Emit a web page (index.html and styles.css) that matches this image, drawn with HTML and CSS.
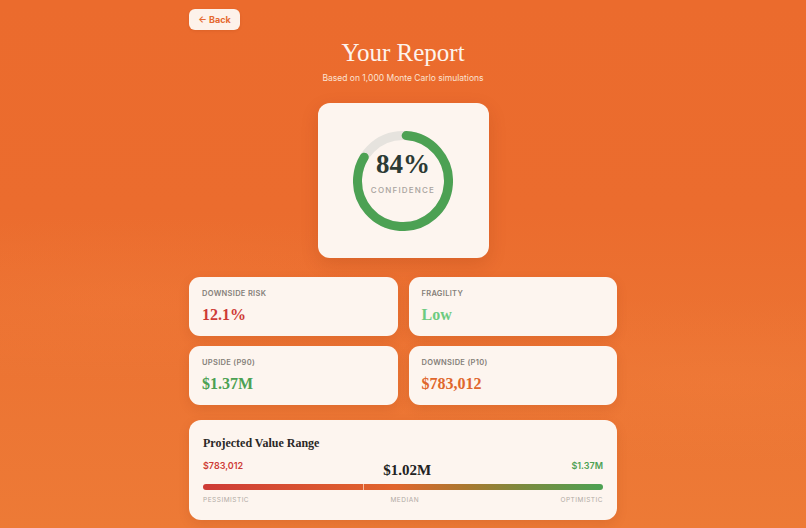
FILE: index.html
```html
<!DOCTYPE html>
<html lang="en">
<head>
<meta charset="utf-8">
<title>Your Report</title>
<link rel="stylesheet" href="styles.css">
</head>
<body>
<main class="page">
  <div class="topbar"><button class="back">← Back</button></div>
  <header class="hero">
    <h1 class="title">Your Report</h1>
    <p class="subtitle">Based on 1,000 Monte Carlo simulations</p>
  </header>
  <section class="gauge-card">
    <div class="gauge">
      <svg class="ring" viewBox="0 0 100 100" width="100" height="100">
        <circle cx="50" cy="50" r="45.5" fill="none" stroke="#E6E3DE" stroke-width="9"/>
        <circle cx="50" cy="50" r="45.5" fill="none" stroke="#4CA153" stroke-width="9" stroke-linecap="round" stroke-dasharray="236 300" transform="rotate(-86 50 50)"/>
      </svg>
      <div class="gauge-text">
        <div class="gauge-value">84%</div>
        <div class="gauge-label">CONFIDENCE</div>
      </div>
    </div>
  </section>
  <section class="stats">
    <div class="stat"><div class="stat-label">DOWNSIDE RISK</div><div class="stat-value red">12.1%</div></div>
    <div class="stat"><div class="stat-label">FRAGILITY</div><div class="stat-value lightgreen">Low</div></div>
    <div class="stat"><div class="stat-label">UPSIDE (P90)</div><div class="stat-value green">$1.37M</div></div>
    <div class="stat"><div class="stat-label">DOWNSIDE (P10)</div><div class="stat-value orange">$783,012</div></div>
  </section>
  <section class="range-card">
    <h2 class="range-title">Projected Value Range</h2>
    <div class="range-values">
      <span class="rv-low">$783,012</span>
      <span class="rv-mid">$1.02M</span>
      <span class="rv-high">$1.37M</span>
    </div>
    <div class="bar"><span class="tick"></span></div>
    <div class="range-labels"><span>PESSIMISTIC</span><span>MEDIAN</span><span>OPTIMISTIC</span></div>
  </section>
</main>
</body>
</html>
```
FILE: styles.css
```css
html, body { margin: 0; padding: 0; }
body {
  min-height: 528px;
  font-family: Inter, "DejaVu Sans", sans-serif;
  background:
    radial-gradient(ellipse 520px 120px at 130px 300px, rgba(255,150,80,0.10), rgba(255,150,80,0) 70%),
    radial-gradient(ellipse 520px 120px at 720px 380px, rgba(255,150,80,0.10), rgba(255,150,80,0) 70%),
    linear-gradient(180deg, #EB6B2D 0%, #EB6C2E 40%, #EC7433 70%, #ED7A36 100%);
  overflow: hidden;
}
.page {
  width: 428px;
  margin: 0 auto;
  padding-top: 9px;
  display: flex;
  flex-direction: column;
}
.topbar { display: flex; }
.back {
  width: 51px;
  height: 21px;
  border: none;
  border-radius: 6px;
  background: #FDF2EA;
  color: #E5692F;
  font-family: Inter, sans-serif;
  font-size: 9px;
  font-weight: 700;
  padding: 0;
  box-shadow: 0 1px 3px rgba(120,40,0,0.12);
}
.hero { text-align: center; color: #FDF3EC; }
.title {
  margin: 7px 0 0;
  font-family: "Liberation Serif", "Times New Roman", serif;
  font-weight: 400;
  font-size: 25px;
  line-height: 32px;
}
.subtitle {
  margin: 3px 0 0;
  font-size: 8.5px;
  line-height: 12px;
  color: #FBE2D2;
}
.gauge-card {
  align-self: center;
  width: 171px;
  height: 155px;
  margin-top: 19px;
  box-sizing: border-box;
  background: #FDF5EF;
  border-radius: 12px;
  box-shadow: 0 6px 18px rgba(120,40,0,0.16);
  display: flex;
  align-items: center;
  justify-content: center;
}
.gauge { display: grid; place-items: center; }
.ring, .gauge-text { grid-area: 1 / 1; }
.gauge-text { display: flex; flex-direction: column; align-items: center; margin-top: -18px; }
.gauge-value {
  font-family: "Liberation Serif", serif;
  font-weight: 700;
  font-size: 27px;
  line-height: 30px;
  color: #2C3A34;
}
.gauge-label {
  margin-top: 6px;
  font-size: 8px;
  letter-spacing: 1.2px;
  color: #A8A39E;
  font-weight: 500;
}
.stats {
  margin-top: 19px;
  display: grid;
  grid-template-columns: 1fr 1fr;
  column-gap: 11px;
  row-gap: 10px;
}
.stat {
  height: 59px;
  box-sizing: border-box;
  background: #FDF5EF;
  border-radius: 11px;
  padding: 12px 13px;
  box-shadow: 0 4px 12px rgba(120,40,0,0.12);
}
.stat-label {
  font-size: 7.5px;
  font-weight: 600;
  letter-spacing: 0.3px;
  color: #858079;
  line-height: 10px;
}
.stat-value {
  margin-top: 6px;
  font-family: "Liberation Serif", serif;
  font-weight: 700;
  font-size: 16px;
  line-height: 20px;
}
.red { color: #CE3B36; }
.lightgreen { color: #6DCB80; }
.green { color: #4CA153; }
.orange { color: #E0672D; }
.range-card {
  margin-top: 15px;
  height: 100px;
  box-sizing: border-box;
  background: #FDF5EF;
  border-radius: 12px;
  padding: 16px 14px 0;
  box-shadow: 0 4px 12px rgba(120,40,0,0.12);
}
.range-title {
  margin: 0;
  font-family: "Liberation Serif", serif;
  font-weight: 700;
  font-size: 12px;
  line-height: 15px;
  color: #2A2826;
}
.range-values {
  margin-top: 9px;
  height: 24px;
  display: flex;
  justify-content: space-between;
  align-items: flex-start;
}
.rv-low, .rv-high { font-size: 9px; font-weight: 600; line-height: 12px; }
.rv-low { color: #CE3B36; }
.rv-high { color: #4CA153; }
.rv-mid {
  margin-top: 1px;
  font-family: "Liberation Serif", serif;
  font-weight: 700;
  font-size: 15px;
  line-height: 18px;
  color: #222;
}
.bar {
  position: relative;
  height: 6px;
  border-radius: 3px;
  background: linear-gradient(90deg, #CE3B36 0%, #DD5A2E 35%, #E1652D 48%, #A9782F 66%, #7B8A3E 80%, #4CA153 100%);
}
.tick {
  position: absolute;
  left: 40%;
  top: 0;
  width: 1px;
  height: 6px;
  background: rgba(255,230,210,0.7);
}
.range-labels {
  margin-top: 5px;
  display: flex;
  justify-content: space-between;
  font-size: 6.5px;
  letter-spacing: 0.5px;
  color: #B1ABA5;
  line-height: 10px;
}
```
